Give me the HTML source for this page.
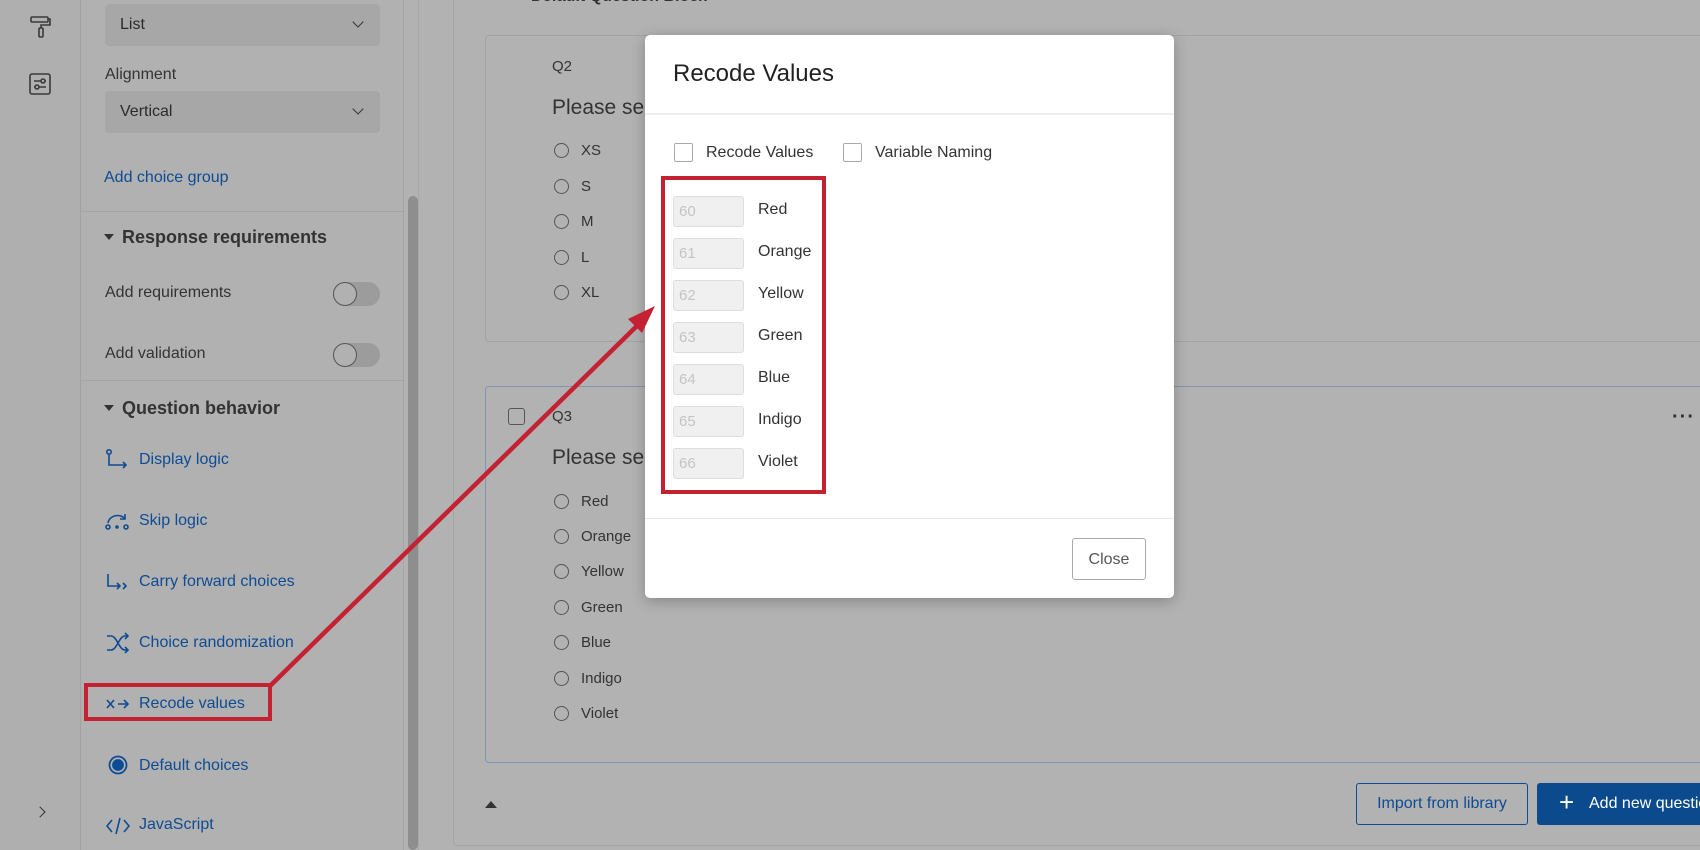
<!DOCTYPE html>
<html><head><meta charset="utf-8"><style>
*{box-sizing:border-box;margin:0;padding:0}
body{width:1700px;height:850px;overflow:hidden;background:#b2b2b2;font-family:"Liberation Sans",sans-serif;color:#2b2b2b;position:relative}
.abs{position:absolute}
.rail{left:0;top:0;width:81px;height:850px;background:#afafaf;border-right:1px solid #a2a2a2}
.side{left:81px;top:0;width:323px;height:850px;background:#b1b1b1;border-right:1px solid #a6a6a6}
.dd{left:105px;width:275px;height:42px;background:#a7a7a7;border-radius:4px;font-size:16px;padding:12px 0 0 15px}
.dd:after{content:"";position:absolute;right:18px;top:14px;width:7px;height:7px;border-right:1.5px solid #333;border-bottom:1.5px solid #333;transform:rotate(45deg)}
.lbl{font-size:16px;color:#333}
.link{font-size:16px;color:#0d4c94}
.hr{left:81px;width:323px;height:1px;background:#a4a4a4}
.h{font-size:18px;font-weight:bold;color:#333;left:104px}
.h:before{content:"";display:inline-block;border-left:5px solid transparent;border-right:5px solid transparent;border-top:6px solid #333;margin-right:8px;vertical-align:3px}
.tog{left:333px;width:47px;height:24px;border-radius:12px;background:#9c9c9c}
.tog:after{content:"";position:absolute;left:0;top:0;width:24px;height:24px;border-radius:50%;background:#b1b1b1;border:1.5px solid #555;box-sizing:border-box}
.ico{left:105px;width:26px;height:22px}
.card{background:#b2b2b2;border:1px solid #a3a3a3;border-radius:4px}
.q{font-size:15px;color:#333}
.pl{font-size:21px;color:#333}
.opt{font-size:15px;color:#333;padding-left:27px}
.opt:before{content:"";position:absolute;left:0;top:1px;width:13px;height:13px;border:1px solid #555;border-radius:50%}
.modal{left:645px;top:35px;width:529px;height:563px;background:#fff;border-radius:5px;box-shadow:0 3px 14px rgba(0,0,0,.25)}
.cb{width:19px;height:19px;border:1px solid #aaa;border-radius:2px;background:#fff}
.inp{left:673px;width:71px;height:31px;background:#f0f0f0;border:1px solid #ddd;border-radius:3px;font-size:15px;color:#c4c4c4;padding:6px 0 0 5px}
.il{left:758px;font-size:16px;color:#333}
</style></head><body>
<div class="abs rail"></div>
<svg class="abs" style="left:28px;top:14px" width="26" height="26" viewBox="0 0 26 26" fill="none" stroke="#3a3a3a" stroke-width="1.6"><rect x="3" y="3" width="17" height="5" rx="1"/><path d="M20 5h2v6h-9v3"/><rect x="11" y="14" width="4" height="9" rx="1"/></svg>
<svg class="abs" style="left:29px;top:73px" width="22" height="22" viewBox="0 0 22 22" fill="none" stroke="#3a3a3a" stroke-width="1.6"><rect x="1" y="1" width="20" height="20" rx="2"/><path d="M5 8h12M5 14h12"/><circle cx="14" cy="8" r="2" fill="#afafaf"/><circle cx="8" cy="14" r="2" fill="#afafaf"/></svg>
<div class="abs" style="left:36px;top:808px;width:8px;height:8px;border-right:1.5px solid #333;border-top:1.5px solid #333;transform:rotate(45deg)"></div>

<div class="abs side"></div>
<div class="abs dd" style="top:4px">List</div>
<div class="abs lbl" style="left:105px;top:66px">Alignment</div>
<div class="abs dd" style="top:91px">Vertical</div>
<div class="abs link" style="left:104px;top:169px">Add choice group</div>
<div class="abs hr" style="top:211px"></div>
<div class="abs h" style="top:227px">Response requirements</div>
<div class="abs lbl" style="left:105px;top:284px">Add requirements</div>
<div class="abs tog" style="top:282px"></div>
<div class="abs lbl" style="left:105px;top:345px">Add validation</div>
<div class="abs tog" style="top:343px"></div>
<div class="abs hr" style="top:380px"></div>
<div class="abs h" style="top:398px">Question behavior</div>

<svg class="abs ico" style="top:449px" viewBox="0 0 26 22" fill="none" stroke="#0d4c94" stroke-width="1.6"><circle cx="4" cy="3" r="2.2"/><path d="M4 6v10h17M18 13l3 3-3 3"/></svg>
<div class="abs link" style="left:139px;top:451px">Display logic</div>
<svg class="abs ico" style="top:510px" viewBox="0 0 26 22" fill="none" stroke="#0d4c94" stroke-width="1.6"><circle cx="3" cy="17" r="2"/><circle cx="12" cy="17" r="1"/><circle cx="21" cy="17" r="2"/><path d="M3 13C4 5 16 3 20 9M20 4v5h-5"/></svg>
<div class="abs link" style="left:139px;top:512px">Skip logic</div>
<svg class="abs ico" style="top:571px" viewBox="0 0 26 22" fill="none" stroke="#0d4c94" stroke-width="1.6"><path d="M3 3v12h12M12 12l3 3-3 3M18 12l3 3-3 3"/></svg>
<div class="abs link" style="left:139px;top:573px">Carry forward choices</div>
<svg class="abs ico" style="top:632px" viewBox="0 0 26 22" fill="none" stroke="#0d4c94" stroke-width="1.6"><path d="M2 4h4c6 0 8 14 14 14h3M2 18h4c6 0 8-14 14-14h3M20 1l3 3-3 3M20 15l3 3-3 3"/></svg>
<div class="abs link" style="left:139px;top:634px">Choice randomization</div>
<svg class="abs ico" style="top:693px" viewBox="0 0 26 22" fill="none" stroke="#0d4c94" stroke-width="1.6"><path d="M2 7l7 8M9 7l-7 8M13 11h10M19 7l4 4-4 4"/></svg>
<div class="abs link" style="left:139px;top:695px">Recode values</div>
<svg class="abs ico" style="top:755px" viewBox="0 0 26 22" fill="none" stroke="#0d4c94" stroke-width="1.8"><circle cx="13" cy="10" r="8.5"/><circle cx="13" cy="10" r="5" fill="#0d4c94"/></svg>
<div class="abs link" style="left:139px;top:757px">Default choices</div>
<svg class="abs ico" style="top:815px" viewBox="0 0 26 22" fill="none" stroke="#0d4c94" stroke-width="1.6"><path d="M7 5l-5 6 5 6M19 5l5 6-5 6M15 3l-4 16"/></svg>
<div class="abs link" style="left:139px;top:816px">JavaScript</div>

<div class="abs" style="left:408px;top:196px;width:10px;height:654px;background:#8e8e8e;border-radius:5px"></div>
<div class="abs" style="left:418px;top:0;width:1282px;height:850px;background:#b2b2b2;border-left:1px solid #a8a8a8"></div>
<div class="abs" style="left:453px;top:-12px;width:1260px;height:858px;border:1px solid #a5a5a5;border-radius:4px"></div>
<div class="abs" style="left:490px;top:-9px;width:10px;height:2px;background:#333"></div>
<div class="abs" style="left:531px;top:-12px;font-size:16px;font-weight:bold;color:#333">Default Question Block</div>

<div class="abs card" style="left:485px;top:35px;width:1230px;height:307px"></div>
<div class="abs q" style="left:552px;top:58px">Q2</div>
<div class="abs pl" style="left:552px;top:96px">Please select</div>
<div class="abs opt" style="left:554px;top:142px">XS</div>
<div class="abs opt" style="left:554px;top:178px">S</div>
<div class="abs opt" style="left:554px;top:213px">M</div>
<div class="abs opt" style="left:554px;top:249px">L</div>
<div class="abs opt" style="left:554px;top:284px">XL</div>

<div class="abs card" style="left:485px;top:386px;width:1230px;height:377px;border-color:#7e96b4"></div>
<div class="abs" style="left:508px;top:408px;width:17px;height:17px;border:1.5px solid #555;border-radius:3px"></div>
<div class="abs q" style="left:552px;top:408px">Q3</div>
<div class="abs pl" style="left:552px;top:446px">Please select</div>
<div class="abs opt" style="left:554px;top:493px">Red</div>
<div class="abs opt" style="left:554px;top:528px">Orange</div>
<div class="abs opt" style="left:554px;top:563px">Yellow</div>
<div class="abs opt" style="left:554px;top:599px">Green</div>
<div class="abs opt" style="left:554px;top:634px">Blue</div>
<div class="abs opt" style="left:554px;top:670px">Indigo</div>
<div class="abs opt" style="left:554px;top:705px">Violet</div>
<div class="abs" style="left:1672px;top:406px;font-size:20px;font-weight:bold;color:#333;letter-spacing:1px">···</div>
<div class="abs" style="left:485px;top:801px;border-left:6px solid transparent;border-right:6px solid transparent;border-bottom:7px solid #333"></div>
<div class="abs" style="left:1356px;top:783px;width:172px;height:42px;border:1.5px solid #0d4c94;border-radius:3px;color:#0d4c94;font-size:16px;text-align:center;padding-top:11px">Import from library</div>
<div class="abs" style="left:1537px;top:783px;width:180px;height:42px;background:#0b4b8d;border-radius:3px;color:#fff;font-size:16px;padding:12px 0 0 52px;white-space:nowrap"><span style="position:absolute;left:22px;top:6px;font-size:26px;line-height:26px">+</span>Add new question</div>

<div class="abs modal"></div>
<div class="abs" style="left:673px;top:60px;font-size:24px;color:#222">Recode Values</div>
<div class="abs" style="left:645px;top:113px;width:529px;height:2px;background:#eee"></div>
<div class="abs cb" style="left:674px;top:143px"></div>
<div class="abs" style="left:706px;top:144px;font-size:16px;color:#333">Recode Values</div>
<div class="abs cb" style="left:843px;top:143px"></div>
<div class="abs" style="left:875px;top:144px;font-size:16px;color:#333">Variable Naming</div>
<div class="abs inp" style="top:196px">60</div><div class="abs il" style="top:201px">Red</div>
<div class="abs inp" style="top:238px">61</div><div class="abs il" style="top:243px">Orange</div>
<div class="abs inp" style="top:280px">62</div><div class="abs il" style="top:285px">Yellow</div>
<div class="abs inp" style="top:322px">63</div><div class="abs il" style="top:327px">Green</div>
<div class="abs inp" style="top:364px">64</div><div class="abs il" style="top:369px">Blue</div>
<div class="abs inp" style="top:406px">65</div><div class="abs il" style="top:411px">Indigo</div>
<div class="abs inp" style="top:448px">66</div><div class="abs il" style="top:453px">Violet</div>
<div class="abs" style="left:645px;top:518px;width:529px;height:1px;background:#e6e6e6"></div>
<div class="abs" style="left:1072px;top:538px;width:74px;height:42px;border:1px solid #aaa;border-radius:3px;font-size:16px;color:#555;text-align:center;padding-top:12px">Close</div>

<div class="abs" style="left:661px;top:176px;width:165px;height:318px;border:4.5px solid #c42232"></div>
<div class="abs" style="left:84px;top:683px;width:188px;height:38px;border:4.5px solid #c42232"></div>
<svg class="abs" style="left:0;top:0" width="1700" height="850"><line x1="270" y1="686" x2="645" y2="318" stroke="#c42232" stroke-width="4.5"/><polygon points="655,306 628,319 642,333" fill="#c42232"/></svg>
</body></html>
